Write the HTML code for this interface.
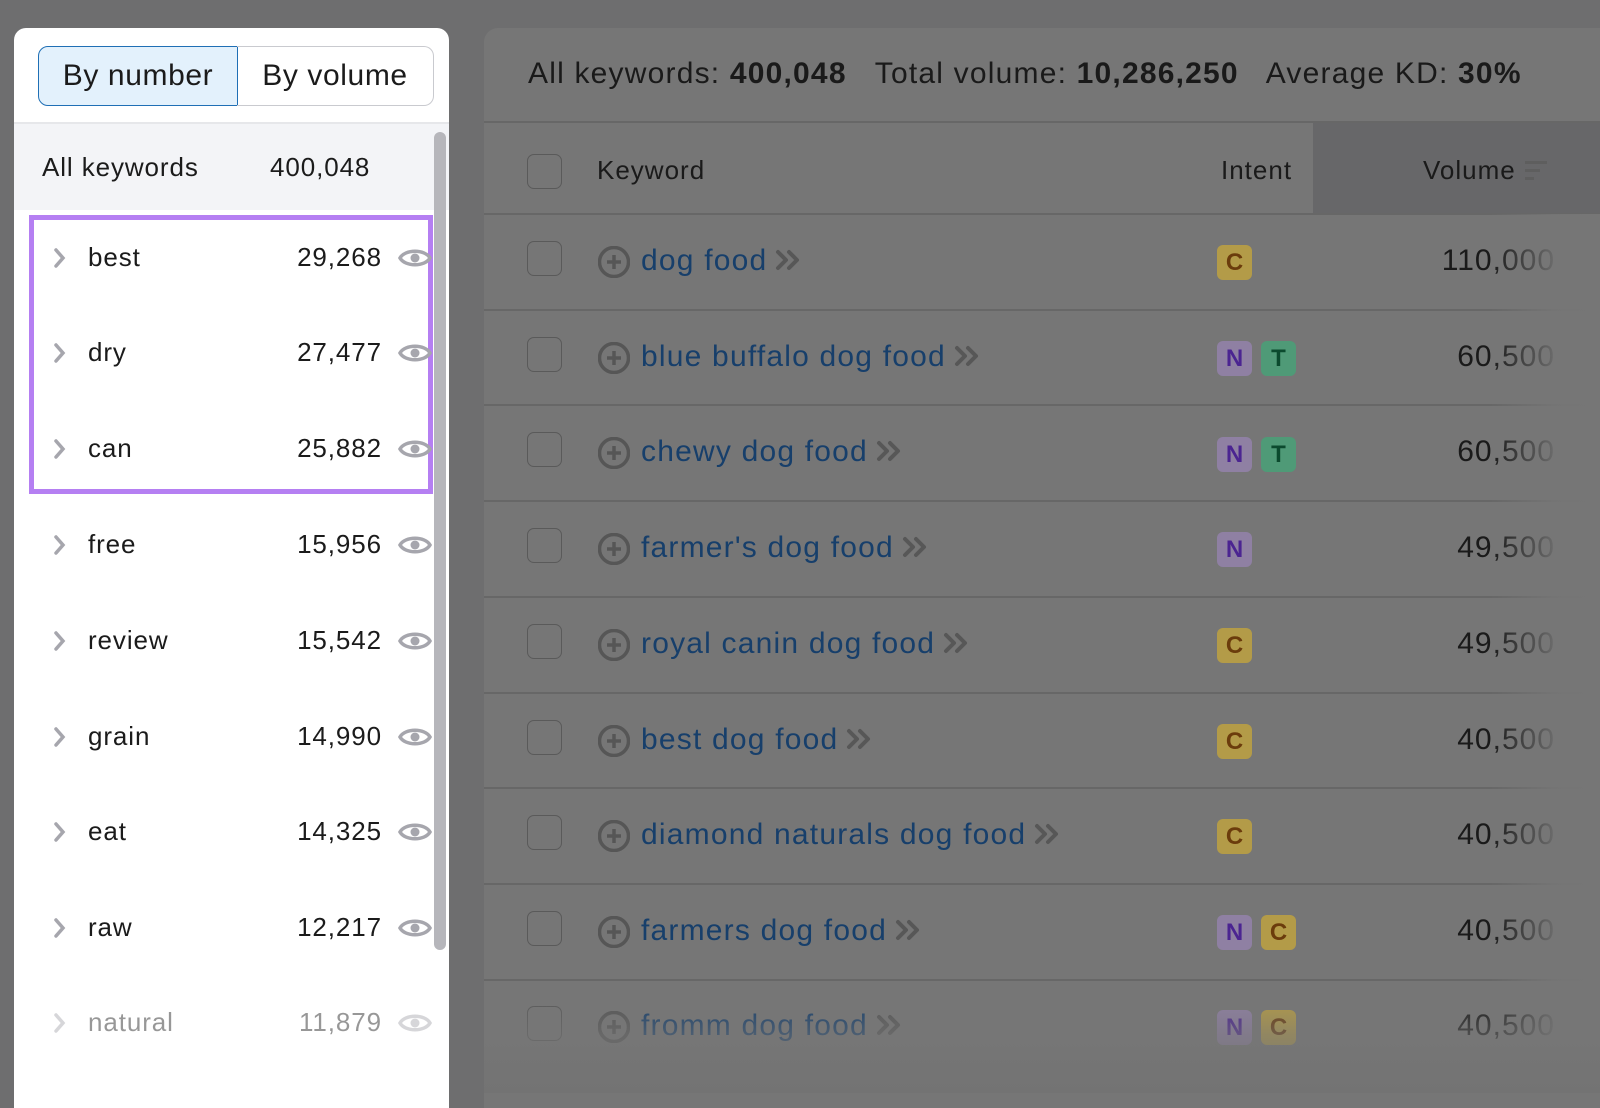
<!DOCTYPE html>
<html><head><meta charset="utf-8"><style>
*{margin:0;padding:0;box-sizing:border-box}
body{width:1600px;height:1093px;background:#6e6e6f;position:relative;overflow:hidden;font-family:"Liberation Sans",sans-serif}
.abs{position:absolute}
#left{left:14px;top:28px;width:435px;height:1080px;background:#fff;border-radius:12px 12px 0 0;overflow:hidden}
.seg{position:absolute;top:18px;height:60px;font-size:30px;line-height:58px;color:#1b1b1b;text-align:center;letter-spacing:.6px}
.lrow{position:absolute;left:0;width:420px;height:60px;font-size:26px;color:#1b1b1b;letter-spacing:.9px}
.lrow .lbl{position:absolute;left:74px;top:14px}
.lrow .num{position:absolute;right:52px;top:14px}
.lrow svg{position:absolute}
#right{left:484px;top:28px;width:1140px;height:1080px;background:#767676;border-radius:14px 0 0 0}
.rtext{font-size:30px;color:#1a1a1a;letter-spacing:1.2px;white-space:nowrap}
.sep{position:absolute;left:484px;width:1116px;height:2px;background:#676767}
.cb{position:absolute;left:527px;width:35px;height:35px;border:1.5px solid #5a5a5a;border-radius:7px}
.kw{position:absolute;left:641px;font-size:30px;color:#173f6b;letter-spacing:1.2px;white-space:nowrap}
.kw svg{margin-left:8px;vertical-align:-1px}
.bd{position:absolute;width:35px;height:35px;border-radius:6px;font-size:24px;font-weight:bold;text-align:center;line-height:35px}
.C{background:#b39b48;color:#6b3c0c}
.N{background:#8f80a3;color:#4b2491}
.T{background:#4f9a77;color:#0b4a2e}
.vol{position:absolute;right:45px;font-size:30px;color:#1a1a1a;letter-spacing:1px}
</style></head><body>

<div id="right" class="abs"></div>
<div class="abs" style="left:1313px;top:123px;width:300px;height:91px;background:#676769"></div>
<div class="abs rtext" style="left:528px;top:57px">All keywords: <b>400,048</b>&nbsp;&nbsp; Total volume: <b>10,286,250</b>&nbsp;&nbsp; Average KD: <b>30%</b></div>
<div class="sep" style="top:121px"></div>
<div class="sep" style="top:213px"></div>
<div class="cb" style="top:154px"></div>
<div class="abs" style="left:597px;top:155px;font-size:26px;color:#1a1a1a;letter-spacing:1px">Keyword</div>
<div class="abs" style="left:1221px;top:155px;font-size:26px;color:#1a1a1a;letter-spacing:1px">Intent</div>
<div class="abs" style="left:1423px;top:155px;font-size:26px;color:#1a1a1a;letter-spacing:1px">Volume</div>
<svg class="abs" style="left:1525px;top:160px" width="24" height="24"><rect x="0" y="1" width="22" height="3" fill="#5e5e5e"/><rect x="0" y="9" width="15" height="3" fill="#5e5e5e"/><rect x="0" y="17" width="9" height="3" fill="#5e5e5e"/></svg>

<svg width="0" height="0" style="position:absolute"><defs><g id="plus"><circle cx="16" cy="16" r="14.5" fill="none" stroke="#565656" stroke-width="3.5"/><path d="M16 9v14M9 16h14" stroke="#565656" stroke-width="3.5"/></g>
<g id="eye"><path d="M2 13C7 4 27 4 32 13C27 22 7 22 2 13Z" fill="none" stroke="#a6a6ad" stroke-width="3.5"/><circle cx="17" cy="13" r="4.5" fill="#a6a6ad"/></g>
<path id="chev" d="M2 2l7 8-7 8" fill="none" stroke="#a6a6ad" stroke-width="3.5" stroke-linecap="round"/>
<path id="dch" d="M3 3l8 8-8 8M14 3l8 8-8 8" fill="none" stroke="#575757" stroke-width="4" stroke-linecap="round" stroke-linejoin="round"/></defs></svg>

<div class="cb" style="top:241px"></div><svg class="abs" style="left:598px;top:246px" width="32" height="32"><use href="#plus"/></svg><div class="kw" style="top:244px">dog food<svg width="26" height="22"><use href="#dch"/></svg></div><div class="bd C" style="left:1217px;top:245px">C</div><div class="vol" style="top:244px">110,000</div>
<div class="sep" style="top:309px"></div>
<div class="cb" style="top:337px"></div><svg class="abs" style="left:598px;top:342px" width="32" height="32"><use href="#plus"/></svg><div class="kw" style="top:340px">blue buffalo dog food<svg width="26" height="22"><use href="#dch"/></svg></div><div class="bd N" style="left:1217px;top:341px">N</div><div class="bd T" style="left:1261px;top:341px">T</div><div class="vol" style="top:340px">60,500</div>
<div class="sep" style="top:404px"></div>
<div class="cb" style="top:432px"></div><svg class="abs" style="left:598px;top:437px" width="32" height="32"><use href="#plus"/></svg><div class="kw" style="top:435px">chewy dog food<svg width="26" height="22"><use href="#dch"/></svg></div><div class="bd N" style="left:1217px;top:437px">N</div><div class="bd T" style="left:1261px;top:437px">T</div><div class="vol" style="top:435px">60,500</div>
<div class="sep" style="top:500px"></div>
<div class="cb" style="top:528px"></div><svg class="abs" style="left:598px;top:533px" width="32" height="32"><use href="#plus"/></svg><div class="kw" style="top:531px">farmer's dog food<svg width="26" height="22"><use href="#dch"/></svg></div><div class="bd N" style="left:1217px;top:532px">N</div><div class="vol" style="top:531px">49,500</div>
<div class="sep" style="top:596px"></div>
<div class="cb" style="top:624px"></div><svg class="abs" style="left:598px;top:629px" width="32" height="32"><use href="#plus"/></svg><div class="kw" style="top:627px">royal canin dog food<svg width="26" height="22"><use href="#dch"/></svg></div><div class="bd C" style="left:1217px;top:628px">C</div><div class="vol" style="top:627px">49,500</div>
<div class="sep" style="top:692px"></div>
<div class="cb" style="top:720px"></div><svg class="abs" style="left:598px;top:725px" width="32" height="32"><use href="#plus"/></svg><div class="kw" style="top:723px">best dog food<svg width="26" height="22"><use href="#dch"/></svg></div><div class="bd C" style="left:1217px;top:724px">C</div><div class="vol" style="top:723px">40,500</div>
<div class="sep" style="top:787px"></div>
<div class="cb" style="top:815px"></div><svg class="abs" style="left:598px;top:820px" width="32" height="32"><use href="#plus"/></svg><div class="kw" style="top:818px">diamond naturals dog food<svg width="26" height="22"><use href="#dch"/></svg></div><div class="bd C" style="left:1217px;top:819px">C</div><div class="vol" style="top:818px">40,500</div>
<div class="sep" style="top:883px"></div>
<div class="cb" style="top:911px"></div><svg class="abs" style="left:598px;top:916px" width="32" height="32"><use href="#plus"/></svg><div class="kw" style="top:914px">farmers dog food<svg width="26" height="22"><use href="#dch"/></svg></div><div class="bd N" style="left:1217px;top:915px">N</div><div class="bd C" style="left:1261px;top:915px">C</div><div class="vol" style="top:914px">40,500</div>
<div class="sep" style="top:979px"></div>
<div class="cb" style="top:1006px"></div><svg class="abs" style="left:598px;top:1011px" width="32" height="32"><use href="#plus"/></svg><div class="kw" style="top:1009px">fromm dog food<svg width="26" height="22"><use href="#dch"/></svg></div><div class="bd N" style="left:1217px;top:1010px">N</div><div class="bd C" style="left:1261px;top:1010px">C</div><div class="vol" style="top:1009px">40,500</div>

<!-- fades -->
<div class="abs" style="left:1490px;top:214px;width:110px;height:879px;background:linear-gradient(90deg,rgba(118,118,118,0) 0%,rgba(118,118,118,.9) 60%,#767676 100%)"></div>
<div class="abs" style="left:484px;top:995px;width:1116px;height:98px;background:linear-gradient(180deg,rgba(118,118,118,0),rgba(118,118,118,.55) 40%,#737373 100%)"></div>

<div id="left" class="abs">
  <div class="seg" style="left:24px;width:200px;background:#e3f1fc;border:1.5px solid #1f6fb5;border-radius:10px 0 0 10px">By number</div>
  <div class="seg" style="left:223px;width:197px;border:1.5px solid #c9cacf;border-left:none;border-radius:0 10px 10px 0">By volume</div>
  <div class="abs" style="left:0;top:94px;width:435px;height:2px;background:#e6e7ea"></div>
  <div class="abs" style="left:0;top:96px;width:435px;height:86px;background:#f3f4f7"></div>
  <div class="abs" style="left:28px;top:124px;font-size:26px;color:#1b1b1b;letter-spacing:.9px">All keywords</div>
  <div class="abs" style="left:256px;top:124px;font-size:26px;color:#1b1b1b;letter-spacing:.9px">400,048</div>
  <div class="abs" style="left:420px;top:104px;width:12px;height:818px;background:#b6b6bb;border-radius:6px"></div>
</div>

<div class="abs" style="left:29px;top:215px;width:404px;height:279px;border:5px solid #b57ff2"></div>

<div style="position:absolute;left:14px;top:0">
<div class="lrow" style="top:228px"><svg style="left:40px;top:20px" width="12" height="20"><use href="#chev"/></svg><span class="lbl">best</span><span class="num">29,268</span><svg style="left:384px;top:17px" width="35" height="27"><use href="#eye"/></svg></div>
<div class="lrow" style="top:323px"><svg style="left:40px;top:20px" width="12" height="20"><use href="#chev"/></svg><span class="lbl">dry</span><span class="num">27,477</span><svg style="left:384px;top:17px" width="35" height="27"><use href="#eye"/></svg></div>
<div class="lrow" style="top:419px"><svg style="left:40px;top:20px" width="12" height="20"><use href="#chev"/></svg><span class="lbl">can</span><span class="num">25,882</span><svg style="left:384px;top:17px" width="35" height="27"><use href="#eye"/></svg></div>
<div class="lrow" style="top:515px"><svg style="left:40px;top:20px" width="12" height="20"><use href="#chev"/></svg><span class="lbl">free</span><span class="num">15,956</span><svg style="left:384px;top:17px" width="35" height="27"><use href="#eye"/></svg></div>
<div class="lrow" style="top:611px"><svg style="left:40px;top:20px" width="12" height="20"><use href="#chev"/></svg><span class="lbl">review</span><span class="num">15,542</span><svg style="left:384px;top:17px" width="35" height="27"><use href="#eye"/></svg></div>
<div class="lrow" style="top:707px"><svg style="left:40px;top:20px" width="12" height="20"><use href="#chev"/></svg><span class="lbl">grain</span><span class="num">14,990</span><svg style="left:384px;top:17px" width="35" height="27"><use href="#eye"/></svg></div>
<div class="lrow" style="top:802px"><svg style="left:40px;top:20px" width="12" height="20"><use href="#chev"/></svg><span class="lbl">eat</span><span class="num">14,325</span><svg style="left:384px;top:17px" width="35" height="27"><use href="#eye"/></svg></div>
<div class="lrow" style="top:898px"><svg style="left:40px;top:20px" width="12" height="20"><use href="#chev"/></svg><span class="lbl">raw</span><span class="num">12,217</span><svg style="left:384px;top:17px" width="35" height="27"><use href="#eye"/></svg></div>
<div class="lrow" style="top:993px;opacity:.45"><svg style="left:40px;top:20px" width="12" height="20"><use href="#chev"/></svg><span class="lbl">natural</span><span class="num">11,879</span><svg style="left:384px;top:17px" width="35" height="27"><use href="#eye"/></svg></div>
</div>
</body></html>
